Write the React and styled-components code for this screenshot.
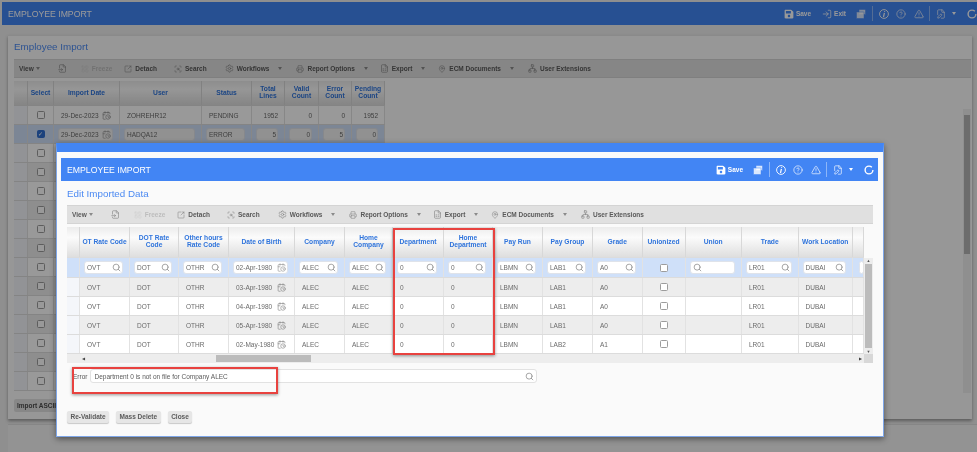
import React from "react";
import styled, { createGlobalStyle } from "styled-components";
import { FaSave } from "react-icons/fa";
import {
  AlertTriangle,
  CalendarClock,
  CircleHelp,
  FileInput,
  FilePen,
  FileSpreadsheet,
  LayoutGrid,
  LogIn,
  MapPin,
  Network,
  Printer,
  ScanSearch,
  Search,
  Settings,
  SquareArrowOutUpRight,
} from "lucide-react";

const GlobalStyle = createGlobalStyle`
  html, body {
    margin: 0;
    padding: 0;
    background: #eee;
    font-family: "Liberation Sans", Arial, sans-serif;
  }
`;

const Screen = styled.div`
  position: relative;
  width: 977px;
  height: 452px;
  overflow: hidden;
  background: #eee;
  filter: blur(0.4px);
`;

const Page = styled.div`
  display: flex;
  flex-direction: column;
  padding: 2px 0 0 2px;
  height: 450px;
`;

const Dim = styled.div`
  position: absolute;
  inset: 0;
  background: rgba(0, 0, 0, 0.4);
`;

const HeaderBar = styled.div`
  flex: none;
  display: flex;
  align-items: center;
  justify-content: space-between;
  height: 23px;
  padding-left: 6px;
  background: #4285f4;
  color: #fff;
`;

const HeaderTitle = styled.div`
  font-size: 8.7px;
`;

const HeaderActions = styled.div`
  display: flex;
  align-items: center;
  padding-right: ${(p) => p.$right}px;
`;

const HeadAction = styled.div`
  display: flex;
  align-items: center;
  gap: 2px;
  margin-left: ${(p) => p.$ml || 0}px;
  font-size: 6.5px;
  font-weight: bold;
  line-height: 10px;
`;

const HeadDivider = styled.div`
  width: 1px;
  height: 15px;
  margin-left: ${(p) => p.$ml}px;
  background: rgba(255, 255, 255, 0.4);
`;

const HeadCaret = styled.span`
  width: 0;
  height: 0;
  margin-left: 6px;
  border-left: 2.5px solid transparent;
  border-right: 2.5px solid transparent;
  border-top: 3px solid #fff;
`;

const Panel = styled.div`
  flex: none;
  display: flex;
  flex-direction: column;
  width: 957px;
  height: 383px;
  margin: 10px 0 0 6px;
  padding: 0 1px 0 6px;
  background: #fcfcfc;
  border-top: 1px solid #e6e6e6;
  box-shadow: 0 2px 3px rgba(0, 0, 0, 0.35);
  box-sizing: content-box;
`;

const FooterPanel = styled.div`
  flex: 1;
  margin: 5px 0 0 6px;
  background: #f6f6f6;
  border-top: 1px solid #e0e0e0;
`;

const SectionTitle = styled.div`
  flex: none;
  display: flex;
  align-items: center;
  height: ${(p) => p.$h}px;
  padding-bottom: ${(p) => p.$lift || 0}px;
  box-sizing: border-box;
  font-size: 9.8px;
  color: #4c8af2;
`;

const ToolbarRow = styled.div`
  flex: none;
  display: flex;
  align-items: center;
  height: 19px;
  padding-left: 5px;
  background: #e0e0e0;
  border-top: 1px solid #d4d4d4;
  border-bottom: 1px solid #d4d4d4;
  box-sizing: border-box;
  font-size: 6.5px;
  font-weight: bold;
  color: #595959;
  white-space: nowrap;
`;

const ToolItem = styled.div`
  display: flex;
  align-items: center;
  gap: 3px;
  margin-left: ${(p) => p.$ml || 0}px;
  color: ${(p) => (p.$off ? "#bdbdbd" : "#595959")};
  svg {
    flex: none;
    color: ${(p) => (p.$off ? "#cfcfcf" : "#808080")};
  }
`;

const ToolCaret = styled.span`
  width: 0;
  height: 0;
  margin-left: ${(p) => p.$ml}px;
  border-left: 2px solid transparent;
  border-right: 2px solid transparent;
  border-top: 3px solid #8a8a8a;
`;

const GridRow = styled.div`
  display: grid;
  grid-template-columns: ${(p) => p.$cols};
  height: ${(p) => p.$h}px;
  background: ${(p) =>
    p.$kind === "head"
      ? "linear-gradient(#ececec, #fbfbfb 35%, #dedede)"
      : p.$kind === "active"
      ? "#cfe0f9"
      : p.$kind === "odd"
      ? "#ededed"
      : "#fff"};
  border-bottom: 1px solid #dcdcdc;
  box-sizing: border-box;
`;

const Cell = styled.div`
  display: flex;
  align-items: center;
  min-width: 0;
  padding-left: ${(p) => p.$pad ?? 7}px;
  justify-content: ${(p) => p.$justify || "flex-start"};
  border-right: 1px solid #e2e2e2;
  font-size: 6.5px;
  color: #6a6a6a;
  white-space: nowrap;
  overflow: hidden;
  box-sizing: border-box;
`;

const NumberCell = styled(Cell)`
  padding: 0 6px 0 0;
  justify-content: flex-end;
`;

const RowHead = styled.div`
  background: ${(p) => (p.$active ? "transparent" : "#f4f6fa")};
  border-right: 1px solid #e2e2e2;
`;

const HeadCell = styled.div`
  display: flex;
  align-items: center;
  justify-content: center;
  padding: 0 1px;
  text-align: center;
  font-size: 6.7px;
  font-weight: bold;
  line-height: 6.6px;
  color: #2f74dc;
  border-right: 1px solid #d8d8d8;
  box-sizing: border-box;
`;

const Field = styled.div`
  display: flex;
  align-items: center;
  justify-content: ${(p) => (p.$numeric ? "flex-end" : "space-between")};
  flex: 1;
  min-width: 0;
  height: 13px;
  margin: 0 6px 0 4px;
  padding: 0 1px 0 2px;
  background: ${(p) => p.$bg || "#fff"};
  border: 1px solid #dfe3ea;
  border-radius: 3px;
  box-sizing: border-box;
  font-size: 6.5px;
  color: #6a6a6a;
  svg {
    flex: none;
    color: #8a8a8a;
  }
`;

const Box = styled.span`
  display: block;
  width: 8px;
  height: 8px;
  background: ${(p) => (p.$checked ? "#2f6fd0" : "#fff")};
  border: 1px solid ${(p) => (p.$checked ? "#2f6fd0" : "#9c9c9c")};
  border-radius: 1.5px;
  box-sizing: border-box;
  color: #fff;
  font-size: 6px;
  line-height: 6px;
  text-align: center;
`;

const BackBody = styled.div`
  flex: none;
  display: flex;
  justify-content: space-between;
  height: 312px;
  margin-top: 3px;
`;

const BackTable = styled.div`
  width: 371px;
`;

const BackScroll = styled.div`
  position: relative;
  width: 8px;
  margin-top: 28px;
  height: 284px;
  background: #efefef;
  &::before {
    content: "";
    display: block;
    margin: 6px 1px 0;
    height: 139px;
    background: #b5b5b5;
  }
`;

const TabRow = styled.div`
  flex: none;
  display: flex;
  margin-top: 6px;
`;

const TabButton = styled.div`
  height: 13px;
  padding: 0 3px;
  font-size: 6.5px;
  line-height: 13px;
  font-weight: bold;
  color: #4b4b4b;
  background: #e2e2e2;
  border-radius: 2px;
`;

const Modal = styled.div`
  position: absolute;
  left: 56px;
  top: 143px;
  width: 828px;
  height: 294px;
  display: flex;
  flex-direction: column;
  padding: 6px 5px 0 4px;
  background: #fafafa;
  border-top: 9px solid #4285f4;
  border-left: 1px solid #7ea6e8;
  border-right: 1px solid #7ea6e8;
  border-bottom: 1px solid #7ea6e8;
  box-sizing: border-box;
  box-shadow: 0 2px 6px rgba(0, 0, 0, 0.45);
`;

const ModalContent = styled.div`
  flex: 1;
  display: flex;
  flex-direction: column;
  padding: 0 5px 0 6px;
`;

const TableShell = styled.div`
  flex: none;
  display: grid;
  grid-template-columns: 797px 9px;
  margin-top: 3px;
`;

const VScroll = styled.div`
  display: flex;
  flex-direction: column;
  margin-top: 31px;
  background: #ededed;
  align-items: center;
  font-size: 4px;
  color: #555;
`;

const VThumb = styled.div`
  flex: 1;
  width: 7px;
  margin: 1px 0;
  background: #bcbcbc;
`;

const HScroll = styled.div`
  grid-column: 1 / 2;
  display: flex;
  align-items: center;
  justify-content: space-between;
  height: 9px;
  padding: 0 2px 0 15px;
  background: #ededed;
  font-size: 4px;
  color: #444;
`;

const HThumb = styled.div`
  width: 95px;
  height: 7px;
  margin-left: 131px;
  margin-right: auto;
  background: #bcbcbc;
`;

const ScrollCorner = styled.div`
  background: #d8d8d8;
`;

const ErrorRow = styled.div`
  flex: none;
  display: flex;
  align-items: center;
  height: 14px;
  margin-top: 6px;
  padding-left: 6px;
  font-size: 6.5px;
  color: #555;
`;

const ErrorField = styled.div`
  display: flex;
  align-items: center;
  justify-content: space-between;
  width: 447px;
  height: 14px;
  margin-left: 3px;
  padding: 0 2px 0 3px;
  background: #fff;
  border: 1px solid #e2e2e2;
  border-radius: 3px;
  box-sizing: border-box;
  font-size: 6.5px;
  color: #5a5a5a;
  svg {
    color: #8a8a8a;
  }
`;

const ButtonRow = styled.div`
  flex: none;
  display: flex;
  gap: 7px;
  margin-top: 28px;
`;

const ActionButton = styled.div`
  height: 12px;
  padding: 0 3.5px;
  font-size: 6.5px;
  font-weight: bold;
  line-height: 12px;
  color: #5a5a5a;
  background: #e6e6e6;
  border-radius: 2px;
  box-shadow: 0 1px 1px rgba(0, 0, 0, 0.2);
`;

const Highlight = styled.div`
  position: absolute;
  left: ${(p) => p.$x}px;
  top: ${(p) => p.$y}px;
  width: ${(p) => p.$w}px;
  height: ${(p) => p.$h}px;
  border: 2px solid #e8423f;
  box-sizing: border-box;
  box-shadow: 0 1px 3px rgba(0, 0, 0, 0.4);
`;

const DateValue = styled.div`
  display: flex;
  align-items: center;
  justify-content: space-between;
  width: 50px;
  svg {
    flex: none;
    color: #777;
  }
`;

const Ring = () => (
  <svg width="10" height="10" viewBox="0 0 10 10" fill="none" stroke="#fff" strokeWidth="1.4">
    <circle cx="5" cy="5" r="3.9" strokeDasharray="21 3.5" />
  </svg>
);

const StackIcon = () => (
  <svg width="10" height="10" viewBox="0 0 10 10" fill="#fff" fillOpacity="0.8" stroke="#4285f4" strokeWidth="0.5">
    <rect x="3" y="0.5" width="6.5" height="5" rx="0.6" />
    <rect x="0.5" y="3" width="7.5" height="6.5" rx="0.6" />
  </svg>
);

const InfoIcon = () => (
  <svg width="10" height="10" viewBox="0 0 10 10" fill="none" stroke="#fff" strokeWidth="0.9">
    <circle cx="5" cy="5" r="4.4" />
    <path d="M5.6 1.9v0.9M5.4 3.9 4.5 8" strokeWidth="1.2" />
  </svg>
);

const toolItems = [
  { label: "View", caret: 2 },
  { Icon: FileInput, ml: 18 },
  { Icon: LayoutGrid, label: "Freeze", ml: 14, off: true, size: 8 },
  { Icon: SquareArrowOutUpRight, label: "Detach", ml: 12, size: 8 },
  { Icon: ScanSearch, label: "Search", ml: 17, size: 8 },
  { Icon: Settings, label: "Workflows", ml: 18, caret: 9 },
  { Icon: Printer, label: "Report Options", ml: 14, caret: 9, size: 8 },
  { Icon: FileSpreadsheet, label: "Export", ml: 12, caret: 9 },
  { Icon: MapPin, label: "ECM Documents", ml: 13, caret: 9, size: 8 },
  { Icon: Network, label: "User Extensions", ml: 14 },
];

function Toolbar() {
  return (
    <ToolbarRow>
      {toolItems.map((item, index) => (
        <ToolItem key={index} $ml={item.ml} $off={item.off}>
          {item.Icon && <item.Icon size={item.size || 9} strokeWidth={1.6} />}
          {item.label}
          {item.caret && <ToolCaret $ml={item.caret - 3} />}
        </ToolItem>
      ))}
    </ToolbarRow>
  );
}

function HeaderIcons() {
  return (
    <>
      <HeadAction $ml={10}>
        <StackIcon />
      </HeadAction>
      <HeadDivider $ml={6} />
      <HeadAction $ml={6}>
        <InfoIcon />
      </HeadAction>
      <HeadAction $ml={7}>
        <CircleHelp size={10} strokeWidth={1.6} />
      </HeadAction>
      <HeadAction $ml={8}>
        <AlertTriangle size={10} strokeWidth={1.6} />
      </HeadAction>
      <HeadDivider $ml={5} />
      <HeadAction $ml={6}>
        <FilePen size={10} strokeWidth={1.6} />
      </HeadAction>
      <HeadCaret />
      <HeadAction $ml={11}>
        <Ring />
      </HeadAction>
    </>
  );
}

const backCols = "14px 26px 66px 82px 50px 33px 34px 33px 33px";
const backHeads = ["", "Select", "Import Date", "User", "Status", "Total Lines", "Valid Count", "Error Count", "Pending Count"];

function BackRows() {
  const rows = [];
  for (let i = 2; i < 15; i++) {
    rows.push(
      <GridRow key={i} $cols={backCols} $h={19} $kind={i % 2 ? "odd" : "even"}>
        <RowHead />
        <Cell $pad={0} $justify="center">
          <Box />
        </Cell>
        <Cell />
        <Cell />
        <Cell />
        <Cell />
        <Cell />
        <Cell />
        <Cell />
      </GridRow>
    );
  }
  return (
    <BackTable>
      <GridRow $cols={backCols} $h={25} $kind="head">
        {backHeads.map((head, index) => (
          <HeadCell key={index}>{head}</HeadCell>
        ))}
      </GridRow>
      <GridRow $cols={backCols} $h={19}>
        <RowHead />
        <Cell $pad={0} $justify="center">
          <Box />
        </Cell>
        <Cell>
          <DateValue>
            29-Dec-2023
            <CalendarClock size={9} strokeWidth={1.5} />
          </DateValue>
        </Cell>
        <Cell>ZOHREHR12</Cell>
        <Cell>PENDING</Cell>
        <NumberCell>1952</NumberCell>
        <NumberCell>0</NumberCell>
        <NumberCell>0</NumberCell>
        <NumberCell>1952</NumberCell>
      </GridRow>
      <GridRow $cols={backCols} $h={19} $kind="active">
        <RowHead $active />
        <Cell $pad={0} $justify="center">
          <Box $checked>✓</Box>
        </Cell>
        <Cell $pad={0}>
          <Field $bg="#f2f2f2">
            29-Dec-2023
            <CalendarClock size={9} strokeWidth={1.5} />
          </Field>
        </Cell>
        <Cell $pad={0}>
          <Field $bg="#f2f2f2">HADQA12</Field>
        </Cell>
        <Cell $pad={0}>
          <Field $bg="#f2f2f2">ERROR</Field>
        </Cell>
        {["5", "0", "5", "0"].map((value, index) => (
          <Cell $pad={0} key={index}>
            <Field $bg="#f2f2f2" $numeric>
              {value}
            </Field>
          </Cell>
        ))}
      </GridRow>
      {rows}
    </BackTable>
  );
}

const modalCols = "13px 50px 49px 50px 66px 50px 48px 51px 49px 50px 50px 49.5px 43px 56.5px 56.5px 54.5px 11px";
const modalHeads = [
  "",
  "OT Rate Code",
  "DOT Rate Code",
  "Other hours Rate Code",
  "Date of Birth",
  "Company",
  "Home Company",
  "Department",
  "Home Department",
  "Pay Run",
  "Pay Group",
  "Grade",
  "Unionized",
  "Union",
  "Trade",
  "Work Location",
  "",
];

const importedRows = [
  { date: "03-Apr-1980", group: "LAB1", grade: "A0" },
  { date: "04-Apr-1980", group: "LAB1", grade: "A0" },
  { date: "05-Apr-1980", group: "LAB1", grade: "A0" },
  { date: "02-May-1980", group: "LAB2", grade: "A1" },
];

function LookupCell({ value }) {
  return (
    <Cell $pad={0}>
      <Field>
        {value}
        <Search size={9} strokeWidth={2} />
      </Field>
    </Cell>
  );
}

function ImportedTable() {
  const filters = ["OVT", "DOT", "OTHR"];
  const filters2 = ["ALEC", "ALEC", "0", "0", "LBMN", "LAB1", "A0"];
  const filters3 = ["", "LR01", "DUBAI"];
  return (
    <div>
      <GridRow $cols={modalCols} $h={31} $kind="head">
        {modalHeads.map((head, index) => (
          <HeadCell key={index}>{head}</HeadCell>
        ))}
      </GridRow>
      <GridRow $cols={modalCols} $h={20} $kind="active">
        <RowHead $active />
        {filters.map((value, index) => (
          <LookupCell key={index} value={value} />
        ))}
        <Cell $pad={0}>
          <Field>
            02-Apr-1980
            <CalendarClock size={9} strokeWidth={1.5} />
          </Field>
        </Cell>
        {filters2.map((value, index) => (
          <LookupCell key={index} value={value} />
        ))}
        <Cell $pad={0} $justify="center">
          <Box />
        </Cell>
        {filters3.map((value, index) => (
          <LookupCell key={index} value={value} />
        ))}
        <Cell $pad={2}>
          <Field />
        </Cell>
      </GridRow>
      {importedRows.map((row, index) => (
        <GridRow key={index} $cols={modalCols} $h={19} $kind={index % 2 ? "even" : "odd"}>
          <RowHead />
          <Cell>OVT</Cell>
          <Cell>DOT</Cell>
          <Cell>OTHR</Cell>
          <Cell>
            <DateValue>
              {row.date}
              <CalendarClock size={9} strokeWidth={1.5} />
            </DateValue>
          </Cell>
          <Cell>ALEC</Cell>
          <Cell>ALEC</Cell>
          <Cell>0</Cell>
          <Cell>0</Cell>
          <Cell>LBMN</Cell>
          <Cell>{row.group}</Cell>
          <Cell>{row.grade}</Cell>
          <Cell $pad={0} $justify="center">
            <Box />
          </Cell>
          <Cell />
          <Cell>LR01</Cell>
          <Cell>DUBAI</Cell>
          <Cell />
        </GridRow>
      ))}
    </div>
  );
}

export default function App() {
  return (
    <Screen>
      <GlobalStyle />
      <Page>
        <HeaderBar>
          <HeaderTitle>EMPLOYEE IMPORT</HeaderTitle>
          <HeaderActions $right={0}>
            <HeadAction>
              <FaSave size={10} />
              Save
            </HeadAction>
            <HeadAction $ml={11}>
              <LogIn size={10} strokeWidth={1.8} />
              Exit
            </HeadAction>
            <HeaderIcons />
          </HeaderActions>
        </HeaderBar>
        <Panel>
          <SectionTitle $h={23} $lift={3}>
            Employee Import
          </SectionTitle>
          <Toolbar />
          <BackBody>
            <BackRows />
            <BackScroll />
          </BackBody>
          <TabRow>
            <TabButton>Import ASCII File</TabButton>
          </TabRow>
        </Panel>
        <FooterPanel />
      </Page>
      <Dim />
      <Modal>
        <HeaderBar>
          <HeaderTitle>EMPLOYEE IMPORT</HeaderTitle>
          <HeaderActions $right={4}>
            <HeadAction>
              <FaSave size={10} />
              Save
            </HeadAction>
            <HeaderIcons />
          </HeaderActions>
        </HeaderBar>
        <ModalContent>
          <SectionTitle $h={24}>Edit Imported Data</SectionTitle>
          <Toolbar />
          <TableShell>
            <ImportedTable />
            <VScroll>
              ▲
              <VThumb />
              ▼
            </VScroll>
            <HScroll>
              ◀
              <HThumb />
              ▶
            </HScroll>
            <ScrollCorner />
          </TableShell>
          <ErrorRow>
            Error
            <ErrorField>
              Department 0 is not on file for Company ALEC
              <Search size={9} strokeWidth={2} />
            </ErrorField>
          </ErrorRow>
          <ButtonRow>
            <ActionButton>Re-Validate</ActionButton>
            <ActionButton>Mass Delete</ActionButton>
            <ActionButton>Close</ActionButton>
          </ButtonRow>
        </ModalContent>
        <Highlight $x={336} $y={76} $w={102} $h={127} />
        <Highlight $x={15} $y={215} $w={206} $h={27} />
      </Modal>
    </Screen>
  );
}
